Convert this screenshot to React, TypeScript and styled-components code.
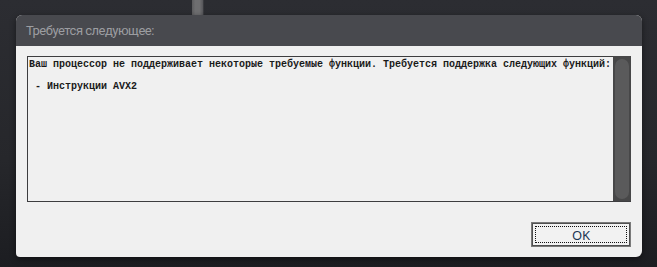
import React from 'react';
import styled, { createGlobalStyle } from 'styled-components';

const GlobalStyle = createGlobalStyle`
  html, body {
    margin: 0;
    padding: 0;
    width: 657px;
    height: 267px;
    overflow: hidden;
    background: #2a2b30;
  }
`;

export default function App() {
  return (
    <>
      <GlobalStyle />
      <Page>
        <BackStrip>
          <BackBar />
        </BackStrip>
        <Dialog>
          <TitleBar>Требуется следующее:</TitleBar>
          <Body>
            <MessageBox>
              <MessageText>
                {'Ваш процессор не поддерживает некоторые требуемые функции. Требуется поддержка следующих функций:\n\n - Инструкции AVX2'}
              </MessageText>
              <ScrollTrack>
                <ScrollThumb />
              </ScrollTrack>
            </MessageBox>
            <Footer>
              <OkButton>
                <FocusRing>OK</FocusRing>
              </OkButton>
            </Footer>
          </Body>
        </Dialog>
      </Page>
    </>
  );
}

const Page = styled.div`
  width: 657px;
  height: 267px;
  display: flex;
  flex-direction: column;
  background: linear-gradient(180deg, #2c2d32 0%, #26272b 60%, #1c1d21 100%);
`;

const BackStrip = styled.div`
  height: 15px;
  display: flex;
  padding-left: 192px;
`;

const BackBar = styled.div`
  width: 11px;
  height: 15px;
  background: linear-gradient(90deg, #5c5c5e 0%, #6e6e70 30%, #6e6e70 70%, #56565a 100%);
  border-right: 1px solid #3a3b3f;
`;

const Dialog = styled.div`
  margin-left: 16px;
  width: 626px;
  height: 242px;
  display: flex;
  flex-direction: column;
  border-radius: 6px 6px 6px 4px;
  overflow: hidden;
  background: #f0f0f0;
  box-shadow: 0 2px 6px rgba(0, 0, 0, 0.45);
`;

const TitleBar = styled.div`
  height: 31px;
  flex: none;
  display: flex;
  align-items: center;
  padding-left: 10px;
  background: #48494e;
  color: #9c9da1;
  font-family: Roboto, "Noto Sans", sans-serif;
  font-size: 13px;
  letter-spacing: -0.5px;
`;

const Body = styled.div`
  flex: 1;
  display: flex;
  flex-direction: column;
  padding: 10px 11px 10px 11px;
`;

const MessageBox = styled.div`
  height: 146px;
  box-sizing: border-box;
  display: flex;
  border: 1px solid #3d3d3f;
  border-right: none;
  background: #f0f0f0;
`;

const MessageText = styled.pre`
  flex: 1;
  margin: 0;
  padding: 2px 0 0 1px;
  font-family: "Liberation Mono", "Courier New", monospace;
  font-size: 10px;
  font-weight: bold;
  line-height: 11px;
  color: #1a1a1a;
  white-space: pre;
  overflow: hidden;
`;

const ScrollTrack = styled.div`
  width: 18px;
  flex: none;
  box-sizing: border-box;
  padding: 3px 2px 2px 2px;
  background: #474748;
  margin-top: -1px;
`;

const ScrollThumb = styled.div`
  height: 100%;
  border-radius: 7px;
  background: #5a5a5b;
`;

const Footer = styled.div`
  flex: 1;
  display: flex;
  justify-content: flex-end;
  align-items: flex-end;
`;

const OkButton = styled.button`
  width: 100px;
  height: 25px;
  box-sizing: border-box;
  padding: 2px;
  border: 2px solid #505050;
  outline: 1px solid #7a7a7a;
  outline-offset: -1px;
  background: #f2f2f2;
  display: flex;
`;

const FocusRing = styled.span`
  flex: 1;
  display: flex;
  align-items: center;
  justify-content: center;
  border: 1px dotted #111;
  font-family: "Noto Sans", "Open Sans", sans-serif;
  font-size: 13px;
  color: #1c3552;
`;
